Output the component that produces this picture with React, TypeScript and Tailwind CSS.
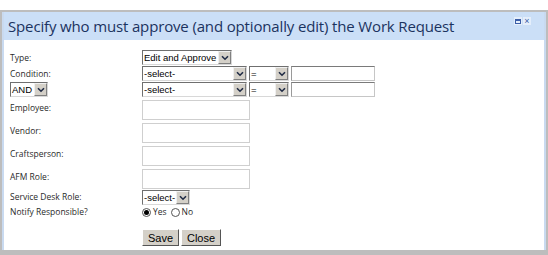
import React from "react";

const Chevron = () => (
  <svg width="8" height="6" viewBox="0 0 8 6">
    <path d="M1 1.2 L4 4.2 L7 1.2" stroke="#1f2a44" strokeWidth="1.6" fill="none" />
  </svg>
);

const arial = { fontFamily: "'Liberation Sans', Arial, sans-serif" };
const open = { fontFamily: "'Open Sans', sans-serif" };

function Select({ text, w }: { text: string; w: number }) {
  return (
    <div
      className="flex h-[15px] items-stretch border border-t-[#6f6f6f] border-l-[#6f6f6f] border-b-[#d8d8d8] border-r-[#d8d8d8] bg-white"
      style={{ width: w }}
    >
      <div className="flex-1 overflow-hidden whitespace-nowrap pl-[1px] text-[9.5px] leading-[13px] text-black" style={arial}>
        {text}
      </div>
      <div className="flex w-[13px] items-center justify-center border border-t-[#f0f0f0] border-l-[#f0f0f0] border-b-[#808080] border-r-[#808080] bg-[#d4d0c8]">
        <Chevron />
      </div>
    </div>
  );
}

function Input({ w, h }: { w: number; h: number }) {
  return (
    <div
      className="border border-[#c6c6c6] border-t-[#7a7a7a] border-l-[#9a9a9a] bg-white"
      style={{ width: w, height: h }}
    />
  );
}

function Box({ w }: { w: number }) {
  return <div className="h-[20px] border border-[#cfcfcf] bg-white" style={{ width: w }} />;
}

const label = "text-[8.5px] text-[#2a2a2a]";

export default function App() {
  return (
    <div className="h-[255px] w-[548px] bg-white pt-[10px]" style={open}>
      <div className="flex h-[245px] flex-col border-x-2 border-t-2 border-b-[5px] border-[#bdbdbd]">
        <div className="flex flex-1 flex-col border-x-2 border-[#c9daf0]">
          <div className="relative flex h-[28px] items-center bg-[#cbdff7] pl-[4px]">
            <span className="text-[15px] tracking-[-0.15px] text-[#1b3360]" style={open}>
              Specify who must approve (and optionally edit) the Work Request
            </span>
            <div className="absolute right-[13px] top-[5px] flex gap-[1px]">
              <div className="flex h-[8px] w-[8px] items-center justify-center bg-[#e4eefb]">
                <div className="h-[5px] w-[6px] border border-t-2 border-[#3b5ea8]" />
              </div>
              <div className="flex h-[8px] w-[8px] items-center justify-center bg-[#e4eefb] text-[9px] leading-none text-[#3b5ea8]" style={arial}>
                ×
              </div>
            </div>
          </div>
          <div className="flex flex-1 items-start bg-white pl-[6px] pt-[10px]">
            <div className="grid grid-cols-[132px_1fr] items-center">
              <div className={`${label} h-[16px] leading-[16px]`} style={open}>Type:</div>
              <div className="h-[16px]"><Select text="Edit and Approve" w={90} /></div>
              <div className={`${label} h-[16px] leading-[16px]`} style={open}>Condition:</div>
              <div className="flex h-[16px] gap-[2px]">
                <Select text="-select-" w={105} />
                <Select text="=" w={40} />
                <Input w={84} h={15} />
              </div>
              <div className="h-[16px]"><Select text="AND" w={38} /></div>
              <div className="flex h-[16px] gap-[2px]">
                <Select text="-select-" w={105} />
                <Select text="=" w={40} />
                <Input w={84} h={15} />
              </div>
              <div className={`${label} h-[23px] pt-[4px] leading-[12px]`} style={open}>Employee:</div>
              <div className="h-[23px] pt-[2px]"><Box w={108} /></div>
              <div className={`${label} h-[23px] pt-[4px] leading-[12px]`} style={open}>Vendor:</div>
              <div className="h-[23px] pt-[2px]"><Box w={108} /></div>
              <div className={`${label} h-[23px] pt-[4px] leading-[12px]`} style={open}>Craftsperson:</div>
              <div className="h-[23px] pt-[2px]"><Box w={108} /></div>
              <div className={`${label} h-[22px] pt-[4px] leading-[12px]`} style={open}>AFM Role:</div>
              <div className="h-[22px] pt-[2px]"><Box w={108} /></div>
              <div className={`${label} h-[16px] leading-[16px]`} style={open}>Service Desk Role:</div>
              <div className="h-[16px] pt-[1px]"><Select text="-select-" w={48} /></div>
              <div className={`${label} h-[14px] leading-[14px]`} style={open}>Notify Responsible?</div>
              <div className="flex h-[14px] items-center gap-[2px] text-[8.5px] text-[#2a2a2a]" style={open}>
                <span className="flex h-[9px] w-[9px] items-center justify-center rounded-full border border-[#555] bg-white">
                  <span className="h-[5px] w-[5px] rounded-full bg-black" />
                </span>
                <span>Yes</span>
                <span className="ml-[2px] h-[9px] w-[9px] rounded-full border border-[#555] bg-white" />
                <span>No</span>
              </div>
              <div className="h-[10px]" />
              <div className="h-[10px]" />
              <div />
              <div className="flex gap-[2px]" style={arial}>
                <button className="h-[17px] w-[37px] border border-t-[#fff] border-l-[#fff] border-b-[#555] border-r-[#555] bg-[#d4d0c8] text-[11px] leading-[14px] text-black">Save</button>
                <button className="h-[17px] w-[40px] border border-t-[#fff] border-l-[#fff] border-b-[#555] border-r-[#555] bg-[#d4d0c8] text-[11px] leading-[14px] text-black">Close</button>
              </div>
            </div>
          </div>
        </div>
      </div>
    </div>
  );
}
